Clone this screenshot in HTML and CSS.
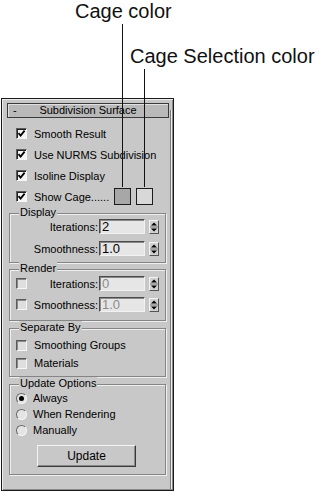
FILE: index.html
```html
<!DOCTYPE html>
<html>
<head>
<meta charset="utf-8">
<link rel="stylesheet" href="styles.css">
</head>
<body>
<div class="page">
  <div class="callouts">
    <div class="callout c1">Cage color</div>
    <div class="callout c2">Cage Selection color</div>
  </div>
  <span class="leader l1"></span>
  <span class="leader l2"></span>

  <div class="panel">
    <div class="content">
      <div class="titlebar"><span class="minus">-</span><span class="title">Subdivision Surface</span><span></span></div>

      <div class="checks">
        <div class="row"><span class="cb"><svg viewBox="0 0 9 9" width="9" height="9"><path d="M1.5 4.2 L3.6 6.6 L7.6 1.6" fill="none" stroke="#000" stroke-width="1.8"/></svg></span><span>Smooth Result</span></div>
        <div class="row"><span class="cb"><svg viewBox="0 0 9 9" width="9" height="9"><path d="M1.5 4.2 L3.6 6.6 L7.6 1.6" fill="none" stroke="#000" stroke-width="1.8"/></svg></span><span>Use NURMS Subdivision</span></div>
        <div class="row"><span class="cb"><svg viewBox="0 0 9 9" width="9" height="9"><path d="M1.5 4.2 L3.6 6.6 L7.6 1.6" fill="none" stroke="#000" stroke-width="1.8"/></svg></span><span>Isoline Display</span></div>
        <div class="row"><span class="cb"><svg viewBox="0 0 9 9" width="9" height="9"><path d="M1.5 4.2 L3.6 6.6 L7.6 1.6" fill="none" stroke="#000" stroke-width="1.8"/></svg></span><span class="cage-label">Show Cage......</span><span class="swatch s1"></span><span class="swatch s2"></span></div>
      </div>

      <div class="group display">
        <span class="legend">Display</span>
        <div class="frow"><span class="slot"></span><span class="flabel">Iterations:</span><span class="field">2</span><span class="spin"><svg viewBox="0 0 8 12" width="8" height="12"><polygon points="4,1.5 7,4.5 1,4.5" fill="#000"/><line x1="0" y1="6" x2="8" y2="6" stroke="#7a7a7a"/><polygon points="1,7.5 7,7.5 4,10.5" fill="#000"/></svg></span></div>
        <div class="frow"><span class="slot"></span><span class="flabel">Smoothness:</span><span class="field">1.0</span><span class="spin"><svg viewBox="0 0 8 12" width="8" height="12"><polygon points="4,1.5 7,4.5 1,4.5" fill="#000"/><line x1="0" y1="6" x2="8" y2="6" stroke="#7a7a7a"/><polygon points="1,7.5 7,7.5 4,10.5" fill="#000"/></svg></span></div>
      </div>

      <div class="group render">
        <span class="legend">Render</span>
        <div class="frow"><span class="cb off"></span><span class="flabel short">Iterations:</span><span class="field dis">0</span><span class="spin"><svg viewBox="0 0 8 12" width="8" height="12"><polygon points="4,1.5 7,4.5 1,4.5" fill="#000"/><line x1="0" y1="6" x2="8" y2="6" stroke="#7a7a7a"/><polygon points="1,7.5 7,7.5 4,10.5" fill="#000"/></svg></span></div>
        <div class="frow"><span class="cb off"></span><span class="flabel short">Smoothness:</span><span class="field dis">1.0</span><span class="spin"><svg viewBox="0 0 8 12" width="8" height="12"><polygon points="4,1.5 7,4.5 1,4.5" fill="#000"/><line x1="0" y1="6" x2="8" y2="6" stroke="#7a7a7a"/><polygon points="1,7.5 7,7.5 4,10.5" fill="#000"/></svg></span></div>
      </div>

      <div class="group separate">
        <span class="legend">Separate By</span>
        <div class="grow"><span class="cb off"></span><span>Smoothing Groups</span></div>
        <div class="grow"><span class="cb off"></span><span>Materials</span></div>
      </div>

      <div class="group update">
        <span class="legend">Update Options</span>
        <div class="rrow"><span class="radio on"></span><span>Always</span></div>
        <div class="rrow"><span class="radio"></span><span>When Rendering</span></div>
        <div class="rrow"><span class="radio"></span><span>Manually</span></div>
        <div class="button">Update</div>
      </div>
    </div>
    <div class="rail"></div>
  </div>
</div>
</body>
</html>
```
FILE: styles.css
```css
body {
  margin: 0;
  background: #fff;
  font-family: "Liberation Sans", Arial, sans-serif;
}

.page {
  position: relative;
  width: 317px;
  height: 493px;
}

.callouts {
  height: 98px;
  font-size: 20px;
  line-height: 23px;
  color: #111;
}

.c1 { margin-left: 75px; }
.c2 { margin-left: 130px; margin-top: 22px; }

.leader {
  position: absolute;
  width: 1px;
  background: #111;
}
.l1 { left: 122px; top: 24px; height: 163px; }
.l2 { left: 144px; top: 69px; height: 118px; }

.panel {
  margin-left: 1px;
  width: 173px;
  height: 393px;
  box-sizing: border-box;
  border: 1px solid #1a1a1a;
  background: #c8c8c8;
  box-shadow: inset 1px 1px 0 #ececec, inset -1px -1px 0 #8a8a8a;
  display: flex;
  padding: 4px 2px 0 5px;
  font-size: 11px;
  color: #000;
}

.content { width: 162px; flex: none; }

.rail {
  width: 1px;
  margin-left: 1px;
  margin-top: 7px;
  height: 379px;
  background: #7a7a7a;
  box-shadow: 1px 0 0 #eeeeee;
  flex: none;
}

.titlebar {
  height: 15px;
  box-sizing: border-box;
  border: 1px solid #3a3a3a;
  background: #b9b9b9;
  box-shadow: inset 1px 1px 0 #e0e0e0;
  display: grid;
  grid-template-columns: 20px 1fr 20px;
  align-items: center;
  line-height: 13px;
}
.minus { padding-left: 5px; }
.title { text-align: center; }

.checks { margin-top: 5px; margin-bottom: 6px; }

.row {
  height: 21px;
  display: flex;
  align-items: center;
  padding-left: 9px;
}

.cb {
  width: 11px;
  height: 11px;
  flex: none;
  box-sizing: border-box;
  border: 1px solid;
  border-color: #5a5a5a #f6f6f6 #f6f6f6 #5a5a5a;
  box-shadow: inset 1px 1px 0 #222;
  background: #f4f4f4;
  margin-right: 7px;
  display: flex;
  align-items: center;
  justify-content: center;
}
.cb.off {
  background: #dedede;
  box-shadow: inset 1px 1px 0 #8a8a8a;
}

.cage-label { width: 80px; flex: none; }

.swatch {
  width: 17px;
  height: 17px;
  flex: none;
  box-sizing: border-box;
  border: 1px solid #1c1c1c;
}
.s1 { background: #a7a7a7; }
.s2 { background: #d8d8d8; margin-left: 5px; }

.group {
  position: relative;
  margin-left: 2px;
  width: 157px;
  box-sizing: border-box;
  border: 1px solid #858585;
  box-shadow: inset 1px 1px 0 #efefef, 1px 1px 0 #efefef;
}

.legend {
  position: absolute;
  top: -8px;
  left: 9px;
  padding: 0 1px;
  line-height: 13px;
  background: #c8c8c8;
}

.display { padding: 5px 0 6px 6px; }
.display .frow + .frow { margin-top: 7px; }

.render { margin-top: 6px; padding: 6px 0 8px 6px; }
.render .frow + .frow { margin-top: 6px; }

.separate { margin-top: 7px; padding: 7px 0 4px 6px; }
.update { margin-top: 7px; padding: 5px 0 7px 6px; }

.frow {
  height: 15px;
  display: flex;
  align-items: center;
}

.slot { width: 11px; flex: none; }
.frow .cb { margin-right: 0; }

.flabel {
  width: 71px;
  flex: none;
  text-align: right;
}

.field {
  margin-left: 1px;
  width: 46px;
  height: 15px;
  flex: none;
  box-sizing: border-box;
  border: 1px solid;
  border-color: #4a4a4a #f2f2f2 #f2f2f2 #4a4a4a;
  box-shadow: inset 1px 1px 0 #8a8a8a;
  background: #e6e6e6;
  padding-left: 2px;
  font-size: 13px;
  line-height: 13px;
}
.field.dis { color: #8c8c8c; }

.spin {
  margin-left: 4px;
  width: 10px;
  height: 14px;
  flex: none;
  box-sizing: border-box;
  border: 1px solid;
  border-color: #f4f4f4 #555 #555 #f4f4f4;
  background: #d0d0d0;
  display: flex;
}

.grow {
  height: 18px;
  display: flex;
  align-items: center;
}

.rrow {
  height: 16px;
  display: flex;
  align-items: center;
}

.radio {
  width: 11px;
  height: 11px;
  flex: none;
  box-sizing: border-box;
  border-radius: 50%;
  border: 1px solid;
  border-color: #6a6a6a #f6f6f6 #f6f6f6 #6a6a6a;
  background: #e4e4e4;
  margin-right: 6px;
  display: flex;
  align-items: center;
  justify-content: center;
}
.radio.on::after {
  content: "";
  width: 5px;
  height: 5px;
  border-radius: 50%;
  background: #000;
}

.button {
  margin-top: 7px;
  margin-left: 21px;
  width: 99px;
  height: 22px;
  box-sizing: border-box;
  border: 1px solid;
  border-color: #f4f4f4 #3a3a3a #3a3a3a #f4f4f4;
  box-shadow: inset -1px -1px 0 #8a8a8a;
  background: #c8c8c8;
  display: flex;
  align-items: center;
  justify-content: center;
  font-size: 12px;
}
```
